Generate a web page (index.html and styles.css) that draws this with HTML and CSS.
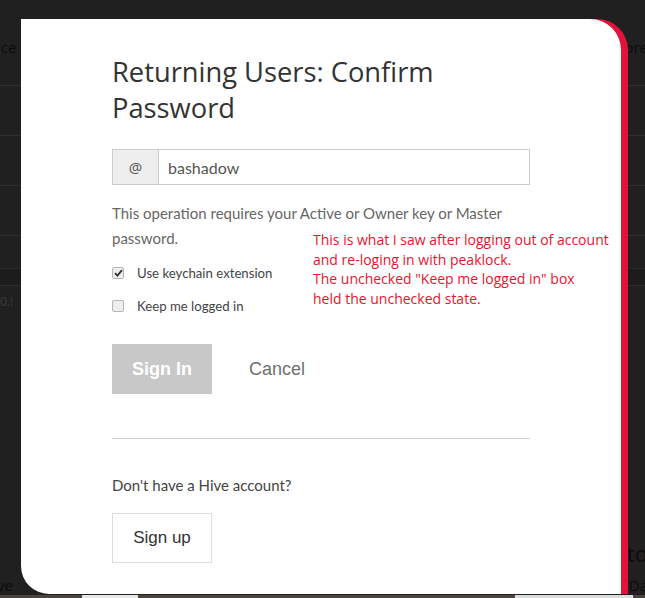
FILE: index.html
```html
<!DOCTYPE html>
<html>
<head>
<meta charset="utf-8">
<link rel="stylesheet" href="styles.css">
</head>
<body>
<div class="page">
  <div class="bg-row r1"><span class="frag">ice</span><span class="frag">ore</span></div>
  <div class="bg-row r2"></div>
  <div class="bg-row r3"></div>
  <div class="bg-row r4"></div>
  <div class="bg-row r5"></div>
  <div class="bg-row r6"></div>
  <div class="bg-area">
    <span class="frag small">0.!</span>
    <span class="frag c">c</span>
    <span class="frag sto">sto</span>
  </div>
  <div class="bg-row last"><span class="frag">ve</span><span class="frag">Da</span></div>
  <div class="strip"><span class="seg s1"></span><span class="seg s2"></span></div>
</div>

<div class="modal">
  <h1 class="title">Returning Users: Confirm Password</h1>
  <div class="input-group">
    <span class="addon">@</span>
    <span class="field">bashadow</span>
  </div>
  <p class="info"><span>This operation requires your Active or Owner key or Master password.</span></p>
  <label class="check"><span class="box checked">
    <svg width="9" height="8" viewBox="0 0 9 8"><path d="M1 4.2 L3.4 6.6 L8 1.2" fill="none" stroke="#333" stroke-width="1.8"/></svg>
  </span>Use keychain extension</label>
  <label class="check"><span class="box"></span>Keep me logged in</label>
  <div class="actions">
    <button class="btn-signin">Sign In</button>
    <button class="btn-cancel">Cancel</button>
  </div>
  <hr class="divider">
  <p class="noacc">Don't have a Hive account?</p>
  <button class="btn-signup">Sign up</button>
</div>

<div class="note">This is what I saw after logging out of account<br>and re-loging in with peaklock.<br>The unchecked "Keep me logged in" box<br>held the unchecked state.</div>
</body>
</html>
```
FILE: styles.css
```css
html, body {
  margin: 0;
  padding: 0;
}
body {
  width: 645px;
  height: 598px;
  overflow: hidden;
  background: #202020;
  font-family: "Open Sans", sans-serif;
  position: relative;
}
.page {
  display: flex;
  flex-direction: column;
  height: 598px;
}
.bg-row {
  border-bottom: 1px solid #303030;
  display: flex;
  justify-content: space-between;
  align-items: center;
  font-size: 15px;
  box-sizing: border-box;
}
.frag { color: #0c0c0c; margin: 0 -3px; }
.r1 { height: 86px; padding-top: 8px; }
.r2 { height: 50px; }
.r3 { height: 50px; }
.r4 { height: 50px; }
.r5 { height: 33px; border-bottom-color: #243024; }
.r6 { height: 17px; background: #1c1c1c; border-bottom-color: #2c2c2c; }
.bg-area {
  height: 282px;
  display: grid;
  grid-template-columns: 1fr auto;
  grid-template-rows: 30px 70px 1fr;
}
.frag.small {
  grid-column: 1;
  grid-row: 1;
  font-size: 12px;
  color: #3a3a3a;
  margin-left: 0;
  align-self: center;
}
.frag.c {
  grid-column: 2;
  grid-row: 2;
  font-size: 18px;
  color: #444;
  align-self: end;
}
.frag.sto {
  grid-column: 2;
  grid-row: 3;
  font-size: 22px;
  align-self: end;
  margin-bottom: 0;
}
.bg-row.last { flex: 1; border-bottom: none; padding-top: 6px; }
.strip {
  height: 3px;
  background: #4d4440;
  display: flex;
}
.seg { display: block; height: 3px; background: #e8e8e8; }
.s1 { margin-left: 82px; width: 56px; }
.s2 { margin-left: 377px; width: 118px; background: #dcdcdc; }

.modal {
  position: absolute;
  left: 21px;
  top: 19px;
  width: 600px;
  height: 575px;
  background: #fff;
  border-radius: 0 31px 0 28px;
  box-shadow: 7px 0 0 #e2133b;
  box-sizing: border-box;
  padding: 35px 91px 0 91px;
}
.title {
  margin: 0;
  font-family: "Open Sans", sans-serif;
  font-weight: 400;
  font-size: 27.3px;
  line-height: 36px;
  color: #333;
  width: 340px;
}
.input-group {
  margin-top: 23px;
  display: flex;
  height: 36px;
  width: 418px;
  border: 1px solid #ccc;
  box-sizing: border-box;
}
.addon {
  width: 45px;
  background: #eee;
  border-right: 1px solid #ccc;
  display: flex;
  align-items: center;
  justify-content: center;
  color: #555;
  font-size: 15px;
}
.field {
  display: flex;
  align-items: center;
  padding-left: 9px;
  color: #555;
  font-family: "Lato", sans-serif;
  font-size: 16px;
}
.info {
  margin: 16px 0 0 0;
  font-family: "Lato", sans-serif;
  font-size: 15px;
  line-height: 25px;
  color: #666;
  width: 400px;
}
.check {
  display: flex;
  align-items: center;
  font-family: "Lato", sans-serif;
  font-size: 13.2px;
  color: #444;
  height: 20px;
  margin-top: 12px;
}
.check + .check { margin-top: 13px; }
.box {
  width: 10px;
  height: 10px;
  border: 1px solid #b5b5b5;
  border-radius: 2px;
  background: #eee;
  margin-right: 13px;
  display: flex;
  align-items: center;
  justify-content: center;
  box-sizing: content-box;
}
.actions {
  margin-top: 28px;
  display: flex;
  align-items: center;
}
.btn-signin {
  width: 100px;
  height: 50px;
  border: none;
  background: #c8c8c8;
  color: #fff;
  font-family: "Liberation Sans", Arial, sans-serif;
  font-weight: 700;
  font-size: 18px;
  padding: 0;
}
.btn-cancel {
  margin-left: 37px;
  border: none;
  background: none;
  padding: 0;
  color: #6f6f6f;
  font-family: "Liberation Sans", Arial, sans-serif;
  font-size: 18px;
}
.divider {
  margin: 44px 0 0 0;
  width: 418px;
  border: none;
  border-top: 1px solid #cfcfcf;
}
.noacc {
  margin: 37px 0 0 0;
  font-family: "Lato", sans-serif;
  font-size: 15px;
  color: #444;
}
.btn-signup {
  display: block;
  margin-top: 19px;
  width: 100px;
  height: 50px;
  border: 1px solid #ddd;
  background: #fff;
  color: #333;
  font-family: "Liberation Sans", Arial, sans-serif;
  font-size: 17px;
  padding: 0;
}
.note {
  position: absolute;
  left: 313px;
  top: 230px;
  font-family: "Open Sans", sans-serif;
  font-size: 14px;
  line-height: 19.5px;
  color: #e8132e;
  white-space: nowrap;
}
```
